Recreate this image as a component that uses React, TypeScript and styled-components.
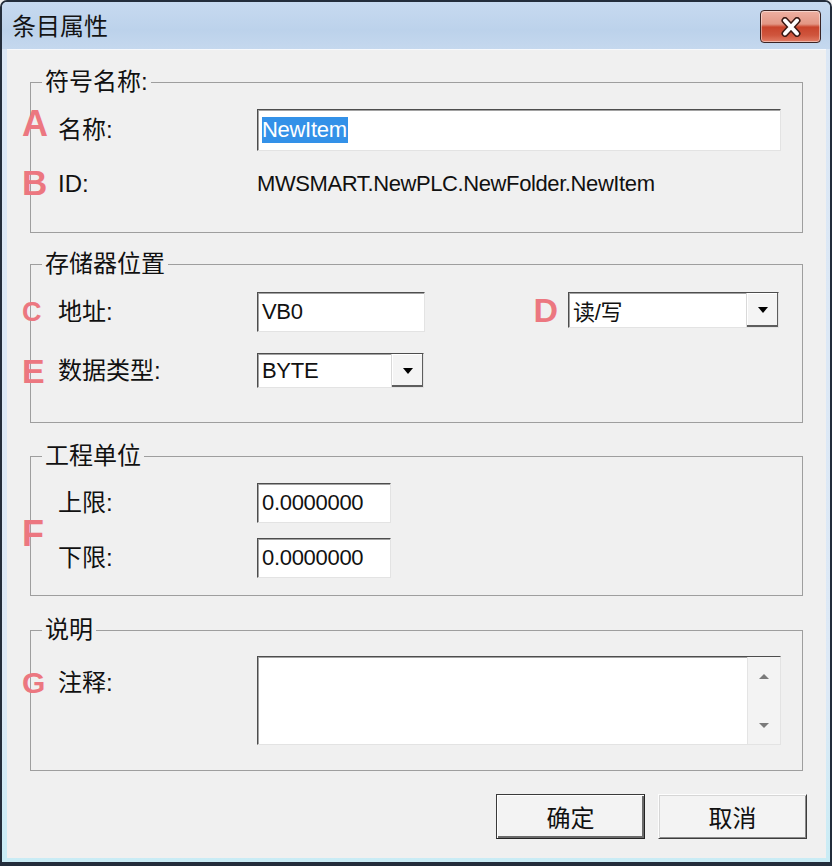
import React from "react";
import styled, { createGlobalStyle, css } from "styled-components";

const FONT = `"Liberation Sans", "Noto Sans CJK SC", sans-serif`;

const Global = createGlobalStyle`
  html, body { margin: 0; padding: 0; background: #f0f0f0; }
  body { font-family: ${FONT}; }
  * { box-sizing: border-box; }
`;

const Window = styled.div`
  width: 832px;
  height: 866px;
  border: 2px solid #232d3b;
  border-bottom-width: 4px;
  border-radius: 7px 7px 0 0;
  background: linear-gradient(to bottom, #dbe7f5 0%, #dde9f6 80%, #c9ecf5 100%);
  display: flex;
  flex-direction: column;
  overflow: hidden;
`;

const TitleBar = styled.div`
  height: 47px;
  flex: none;
  display: flex;
  align-items: flex-start;
  justify-content: space-between;
  padding: 0 9px 0 10px;
  background: linear-gradient(to bottom, #c7daf0 0%, #bcd2eb 60%, #c5d8ee 100%);
`;

const Title = styled.div`
  margin-top: 10px;
  font-size: 24px;
  line-height: 30px;
  color: #141414;
`;

const CloseButton = styled.div`
  margin-top: 8px;
  width: 61px;
  height: 33px;
  border: 1px solid #3a2424;
  border-radius: 4px;
  background: linear-gradient(
    to bottom,
    #eeb0a2 0%,
    #e39684 42%,
    #c9442c 52%,
    #cf553d 78%,
    #e27d66 100%
  );
  box-shadow: inset 0 0 0 1px rgba(255, 255, 255, 0.45);
  display: flex;
  align-items: center;
  justify-content: center;
`;

const Client = styled.div`
  flex: 1;
  margin: 0 4px 4px 5px;
  background: #f0f0f0;
  border-top: 1px solid #f7f9fc;
  padding: 19px 23px 0;
  display: flex;
  flex-direction: column;
`;

const Group = styled.fieldset<{ $mt: number; $pt: number; $pb: number }>`
  margin: ${(p) => p.$mt}px 0 0;
  padding: ${(p) => p.$pt}px 21px ${(p) => p.$pb}px 0;
  border: 1px solid #9e9e9e;
  min-width: 0;
`;

const Legend = styled.legend`
  margin-left: 11px;
  padding: 0 3px;
  font-size: 24px;
  line-height: 26px;
  color: #111;
`;

const Fields = styled.div<{ $gap: number; $align?: string }>`
  display: grid;
  grid-template-columns: 36px 199px 1fr;
  row-gap: ${(p) => p.$gap}px;
  align-items: ${(p) => p.$align || "center"};
  margin-left: -9px;
`;

const Marker = styled.span<{ $size: number; $rows?: number; $dy?: number; $top?: number }>`
  grid-column: 1;
  ${(p) => (p.$rows ? `grid-row: span ${p.$rows};` : "")}
  margin-top: ${(p) => p.$top || 0}px;
  transform: translateY(${(p) => p.$dy || 0}px);
  font-family: "Liberation Sans", sans-serif;
  font-weight: bold;
  font-size: ${(p) => p.$size}px;
  line-height: 28px;
  color: #ec7780;
  position: relative;
  z-index: 1;
`;

const InlineMarker = styled(Marker)`
  margin-right: 10px;
`;

const Label = styled.span<{ $top?: number }>`
  grid-column: 2;
  margin-top: ${(p) => p.$top || 0}px;
  font-size: 24px;
  line-height: 30px;
  color: #111;
  white-space: nowrap;
`;

const Value = styled.span`
  grid-column: 3;
  font-size: 22px;
  letter-spacing: -0.4px;
  line-height: 30px;
  color: #111;
  white-space: nowrap;
`;

const sunken = css`
  background: #fff;
  border: 1px solid;
  border-color: #4d4d4d #e3e3e3 #e3e3e3 #4d4d4d;
  box-shadow: inset 1px 1px 0 #a2a2a2;
`;

const TextBox = styled.div<{ $w?: number; $h: number }>`
  ${sunken}
  grid-column: 3;
  width: ${(p) => (p.$w ? `${p.$w}px` : "auto")};
  height: ${(p) => p.$h}px;
  padding: 0 4px;
  display: flex;
  align-items: center;
  font-size: 22px;
  letter-spacing: -0.3px;
  color: #111;
  white-space: nowrap;
`;

const Selected = styled.span`
  background: #3391e8;
  color: #fff;
  line-height: 26px;
  padding: 0 1px 0 0;
`;

const FieldLine = styled.div`
  grid-column: 3;
  display: flex;
  align-items: flex-start;
  justify-content: space-between;
  padding-right: 2px;
`;

const Pair = styled.div`
  display: flex;
  align-items: center;
`;

const Combo = styled.div<{ $w: number; $h: number }>`
  ${sunken}
  width: ${(p) => p.$w}px;
  height: ${(p) => p.$h}px;
  display: flex;
  align-items: stretch;
`;

const ComboText = styled.span`
  flex: 1;
  padding-left: 4px;
  display: flex;
  align-items: center;
  font-size: 22px;
  letter-spacing: -0.3px;
  color: #111;
  white-space: nowrap;
`;

const DropButton = styled.span`
  width: 32px;
  flex: none;
  background: #f4f4f4;
  box-shadow: inset -1px -2px 0 #5e5e5e, inset 1px 1px 0 #ffffff;
  border-left: 1px solid #d9d9d9;
  display: flex;
  align-items: center;
  justify-content: center;
`;

const Memo = styled.div`
  ${sunken}
  grid-column: 3;
  height: 89px;
  display: flex;
  justify-content: flex-end;
`;

const VScroll = styled.div`
  width: 33px;
  background: #f3f3f3;
  border-left: 1px solid #e4e4e4;
  display: flex;
  flex-direction: column;
  justify-content: space-between;
  align-items: center;
  padding: 17px 0 16px;
`;

const ButtonRow = styled.div`
  display: flex;
  justify-content: flex-end;
  gap: 13px;
  margin: 23px -4px 0 0;
`;

const Button = styled.button<{ $default?: boolean }>`
  width: 149px;
  height: 45px;
  padding: 0;
  font-family: ${FONT};
  font-size: 24px;
  color: #111;
  background: #f3f3f3;
  border: 1px solid;
  border-color: ${(p) =>
    p.$default ? "#3a3a3a #222 #222 #3a3a3a" : "#fdfdfd #3c3c3c #3c3c3c #fdfdfd"};
  box-shadow: ${(p) =>
    p.$default
      ? "inset 1px 1px 0 #fff, inset -2px -2px 0 #6a6a6a"
      : "inset 1px 1px 0 #d6d6d6, inset -1px -1px 0 #8a8a8a"};
`;

const Arrow = ({ dir, color, w = 11, h = 6 }: { dir: "up" | "down"; color: string; w?: number; h?: number }) => (
  <svg width={w} height={h} viewBox={`0 0 ${w} ${h}`}>
    <polygon
      points={dir === "down" ? `0,0 ${w},0 ${w / 2},${h}` : `0,${h} ${w},${h} ${w / 2},0`}
      fill={color}
    />
  </svg>
);

const CloseGlyph = () => (
  <svg width="22" height="20" viewBox="0 0 22 20">
    <path d="M5 3.5 L17 16.5 M17 3.5 L5 16.5" stroke="#3b1a14" strokeWidth="7" strokeLinecap="round" />
    <path d="M5 3.5 L17 16.5 M17 3.5 L5 16.5" stroke="#ffffff" strokeWidth="4" strokeLinecap="round" />
  </svg>
);

export default function App() {
  return (
    <>
      <Global />
      <Window>
        <TitleBar>
          <Title>条目属性</Title>
          <CloseButton>
            <CloseGlyph />
          </CloseButton>
        </TitleBar>
        <Client>
          <Group $mt={0} $pt={14} $pb={33}>
            <Legend>符号名称:</Legend>
            <Fields $gap={18}>
              <Marker $size={36} $dy={-6}>A</Marker>
              <Label>名称:</Label>
              <TextBox $h={42}>
                <Selected>NewItem</Selected>
              </TextBox>
              <Marker $size={35} $dy={-1}>B</Marker>
              <Label>ID:</Label>
              <Value>MWSMART.NewPLC.NewFolder.NewItem</Value>
            </Fields>
          </Group>

          <Group $mt={18} $pt={15} $pb={34}>
            <Legend>存储器位置</Legend>
            <Fields $gap={21}>
              <Marker $size={27}>C</Marker>
              <Label>地址:</Label>
              <FieldLine>
                <TextBox $w={168} $h={40}>VB0</TextBox>
                <Pair>
                  <InlineMarker $size={34}>D</InlineMarker>
                  <Combo $w={211} $h={36}>
                    <ComboText>读/写</ComboText>
                    <DropButton>
                      <Arrow dir="down" color="#000" w={10} h={6} />
                    </DropButton>
                  </Combo>
                </Pair>
              </FieldLine>
              <Marker $size={34}>E</Marker>
              <Label>数据类型:</Label>
              <FieldLine>
                <Combo $w={167} $h={35}>
                  <ComboText>BYTE</ComboText>
                  <DropButton>
                    <Arrow dir="down" color="#000" w={10} h={6} />
                  </DropButton>
                </Combo>
              </FieldLine>
            </Fields>
          </Group>

          <Group $mt={20} $pt={14} $pb={17}>
            <Legend>工程单位</Legend>
            <Fields $gap={15}>
              <Marker $size={36} $rows={2} $dy={3}>F</Marker>
              <Label>上限:</Label>
              <TextBox $w={134} $h={40}>0.0000000</TextBox>
              <Label>下限:</Label>
              <TextBox $w={134} $h={40}>0.0000000</TextBox>
            </Fields>
          </Group>

          <Group $mt={21} $pt={13} $pb={25}>
            <Legend>说明</Legend>
            <Fields $gap={0} $align="start">
              <Marker $size={30} $top={13}>G</Marker>
              <Label $top={12}>注释:</Label>
              <Memo>
                <VScroll>
                  <Arrow dir="up" color="#7a7a7a" w={10} h={5} />
                  <Arrow dir="down" color="#7a7a7a" w={10} h={5} />
                </VScroll>
              </Memo>
            </Fields>
          </Group>

          <ButtonRow>
            <Button $default>确定</Button>
            <Button>取消</Button>
          </ButtonRow>
        </Client>
      </Window>
    </>
  );
}
